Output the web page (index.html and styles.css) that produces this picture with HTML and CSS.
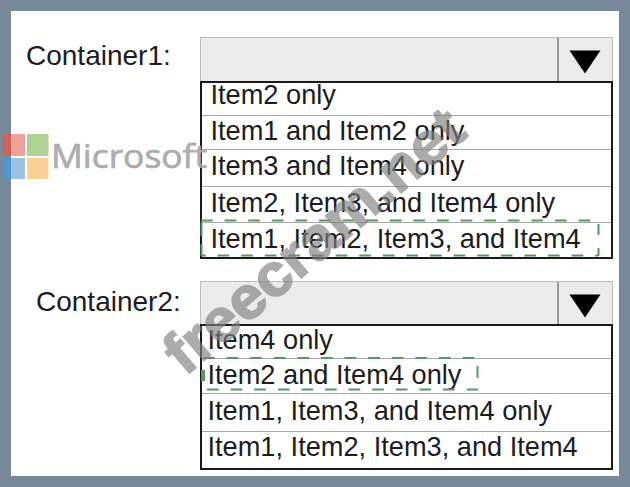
FILE: index.html
```
<!DOCTYPE html>
<html>
<head>
  <meta charset="utf-8">
  <title>Containers</title>
  <link rel="stylesheet" href="styles.css">
</head>
<body>
  <div class="page">
    <div class="question first">
      <div class="label">Container1:</div>
      <div class="dropdown">
        <div class="head">
          <div class="value"></div>
          <div class="button"><svg width="32" height="24" viewBox="0 0 32 24"><path d="M0.5 0.5h31L16 23.5z"/></svg></div>
        </div>
        <ul class="list">
          <li>Item2 only</li>
          <li>Item1 and Item2 only</li>
          <li>Item3 and Item4 only</li>
          <li>Item2, Item3, and Item4 only</li>
          <li>Item1, Item2, Item3, and Item4</li>
        </ul>
        <svg class="mark" width="402" height="40">
          <path d="M1 2.5H392" stroke-dasharray="11.7 11.9"/>
          <path d="M1 37.5H398" stroke-dasharray="11.7 11.9" stroke-dashoffset="7"/>
          <path d="M1.5 4V18M1.5 26V38M398.5 6V17M398.5 30V38"/>
        </svg>
      </div>
    </div>
    <div class="question second">
      <div class="label">Container2:</div>
      <div class="dropdown">
        <div class="head">
          <div class="value"></div>
          <div class="button"><svg width="32" height="24" viewBox="0 0 32 24"><path d="M0.5 0.5h31L16 23.5z"/></svg></div>
        </div>
        <ul class="list">
          <li>Item4 only</li>
          <li>Item2 and Item4 only</li>
          <li>Item1, Item3, and Item4 only</li>
          <li>Item1, Item2, Item3, and Item4</li>
        </ul>
        <svg class="mark" width="402" height="40">
          <path d="M3 2H275" stroke-dasharray="11.7 11.9"/>
          <path d="M7 33.5H278" stroke-dasharray="11.7 11.9"/>
          <path class="thick" d="M3 14V25"/>
          <path d="M277.5 10V22"/>
        </svg>
      </div>
    </div>
  </div>

  <svg class="overlay" width="630" height="487">
    <rect x="3" y="134" width="22" height="22" fill="#f0a099"/>
    <rect x="3" y="134" width="8" height="22" fill="#cd625b"/>
    <rect x="27" y="134" width="21.5" height="22" fill="#b1d094"/>
    <rect x="3" y="158" width="22" height="21" fill="#9dc1e5"/>
    <rect x="3" y="158" width="8" height="21" fill="#4b99c9"/>
    <rect x="27" y="158" width="21.5" height="21" fill="#fccf92"/>
    <text class="brand" x="51" y="167.5" textLength="156" lengthAdjust="spacingAndGlyphs">Microsoft</text>
    <text class="site" transform="translate(185 377) rotate(-40.4)" textLength="373" lengthAdjust="spacingAndGlyphs">freecram.net</text>
  </svg>
</body>
</html>
```
FILE: styles.css
```
* {
  box-sizing: border-box;
}
body {
  margin: 0;
  font-family: "Liberation Sans", Arial, sans-serif;
  font-size: 27.2px;
  color: #1c1c1e;
}
.page {
  width: 630px;
  height: 487px;
  border: 11px solid #778899;
  background: #fff;
  padding-top: 26px;
  overflow: hidden;
}
.question {
  display: flex;
  justify-content: space-between;
  padding-right: 6px;
}
.second {
  margin-top: 22px;
}
.label {
  font-size: 28px;
  line-height: 38px;
  padding-left: 15px;
}
.second .label {
  padding-left: 25px;
  padding-top: 2px;
}
.dropdown {
  position: relative;
  width: 413px;
}
.head {
  display: flex;
  height: 44px;
  background: #ebebeb;
  border: 1px solid #bdbdbd;
  border-bottom: none;
}
.second .head {
  height: 43px;
}
.value {
  flex: 1;
}
.button {
  width: 55px;
  border-left: 2px solid #999;
  padding: 12px 0 0 10px;
}
.button svg {
  display: block;
}
.list {
  list-style: none;
  margin: 0;
  padding: 0;
  border: 2px solid #1a1a1a;
}
.list li {
  height: 36px;
  line-height: 31px;
  padding-left: 8.5px;
  white-space: nowrap;
  border-bottom: 1px solid #a8a8a8;
}
.second .list li {
  padding-left: 5.5px;
}
.list li:first-child {
  height: 33px;
}
.first li:nth-child(1) {
  line-height: 24px;
}
.first li:nth-child(2) {
  height: 34px;
  line-height: 29px;
}
.first li:nth-child(3) {
  height: 37px;
  line-height: 32px;
}
.first .list li:last-child {
  height: 34px;
}
.second li:nth-child(1) {
  line-height: 27px;
}
.second li:nth-child(2) {
  height: 35px;
  line-height: 32px;
}
.second li:nth-child(3) {
  height: 38px;
  line-height: 34px;
}
.second li:nth-child(4) {
  line-height: 29px;
}
.list li:last-child {
  border-bottom: none;
}
/* dashed frame round the chosen answer */
.mark {
  position: absolute;
  left: 0;
  fill: none;
  stroke: #55995f;
  stroke-width: 2;
}
.mark .thick {
  stroke-width: 4;
}
.first .mark {
  top: 181px;
}
.second .mark {
  top: 75px;
}
.overlay {
  position: absolute;
  left: 0;
  top: 0;
}
.brand {
  font-family: "Open Sans", sans-serif;
  font-size: 33.5px;
  fill: #a9a9aa;
  stroke: #a9a9aa;
  stroke-width: .7;
  opacity: .95;
}
.site {
  font-size: 60px;
  font-weight: bold;
  fill: #808080;
  stroke: #808080;
  stroke-width: 1.6;
  opacity: .65;
}
```
